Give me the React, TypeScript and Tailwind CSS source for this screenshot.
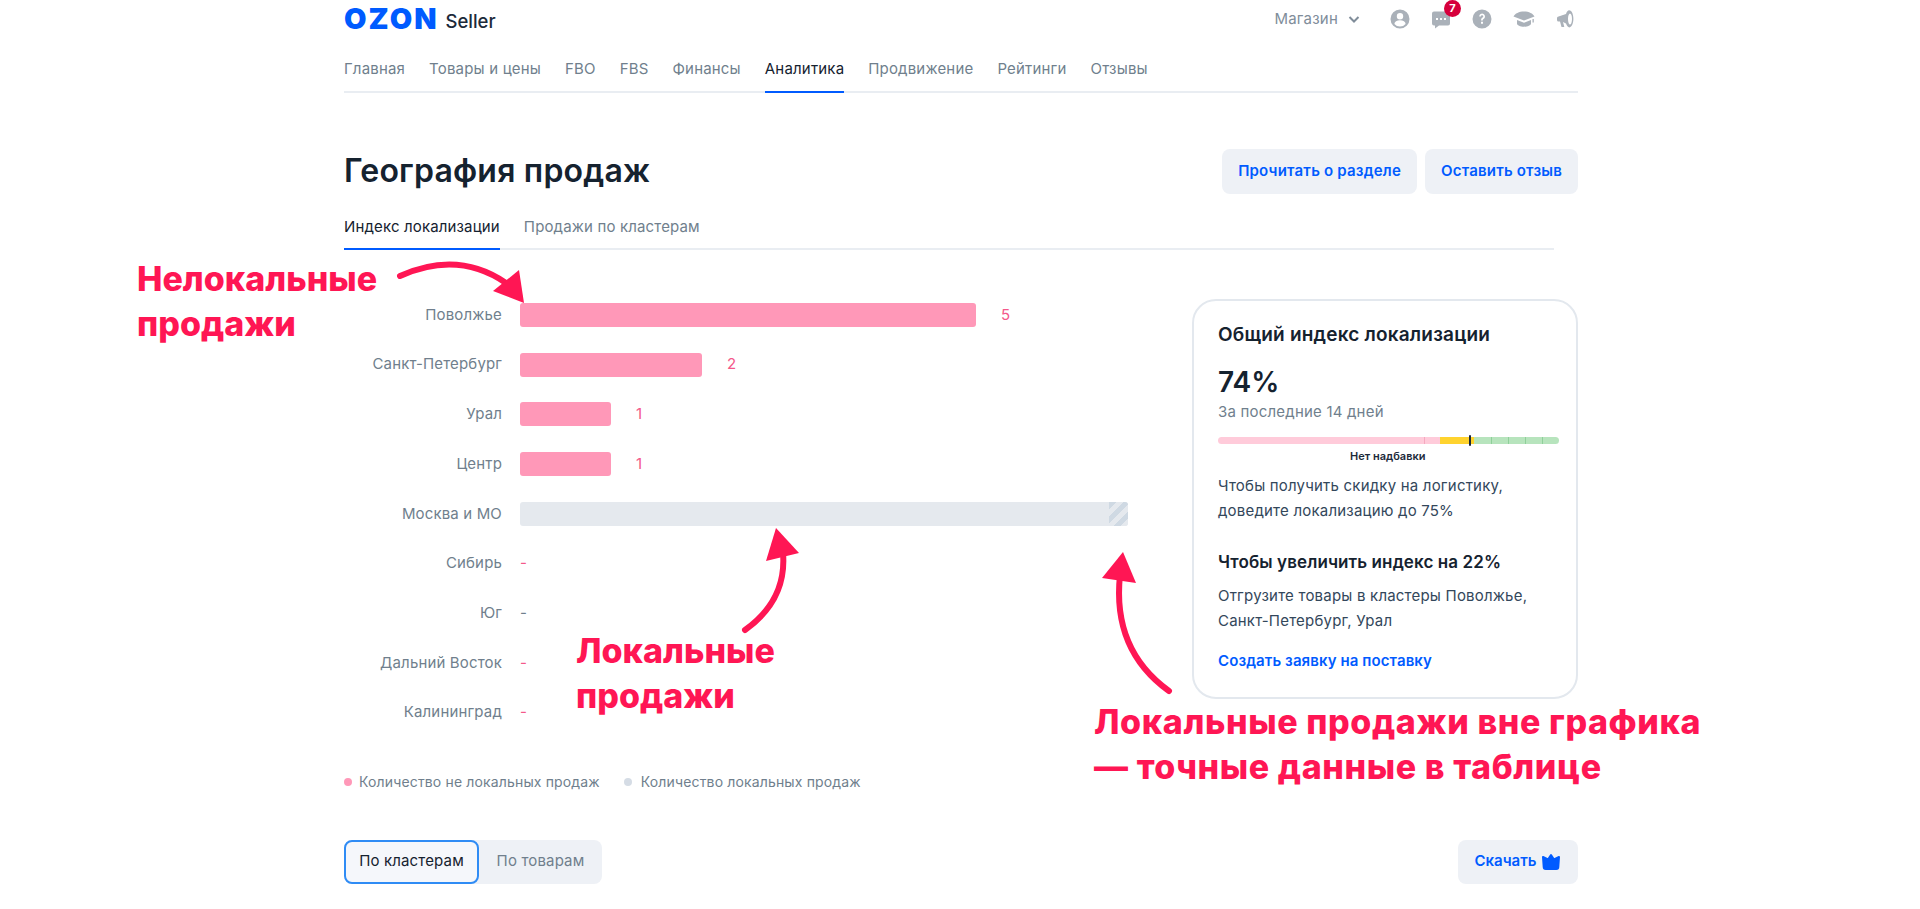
import React from 'react'

const navItems = ['Главная', 'Товары и цены', 'FBO', 'FBS', 'Финансы', 'Аналитика', 'Продвижение', 'Рейтинги', 'Отзывы']

const rows = [
  { name: 'Поволжье', width: 456, value: '5' },
  { name: 'Санкт-Петербург', width: 182, value: '2' },
  { name: 'Урал', width: 91, value: '1' },
  { name: 'Центр', width: 91, value: '1' },
  { name: 'Москва и МО', width: 0, value: '' },
  { name: 'Сибирь', width: 0, value: '-' },
  { name: 'Юг', width: 0, value: '-', muted: true },
  { name: 'Дальний Восток', width: 0, value: '-' },
  { name: 'Калининград', width: 0, value: '-' },
]

function HeaderIcons() {
  return (
    <div className="flex items-center gap-[21px] pr-[2px] text-[#aab1b9]">
      {/* profile */}
      <svg width="20" height="20" viewBox="0 0 20 20" fill="currentColor">
        <path fillRule="evenodd" d="M10 0.500a9.500 9.500 0 1 0 0 19a9.500 9.500 0 0 0 0-19zM10 4a3.200 3.200 0 1 1 0 6.400a3.200 3.200 0 0 1 0-6.400zM4.400 15a5.600 3.800 0 0 1 11.200 0a7.400 7.400 0 0 1-11.200 0z" />
      </svg>
      {/* chat with badge */}
      <div className="relative h-5 w-5">
        <svg width="20" height="20" viewBox="0 0 20 20" fill="currentColor">
          <path fillRule="evenodd" d="M3 2.500h14a2 2 0 0 1 2 2v10a2 2 0 0 1-2 2H8l-4 3V16.500H3a2 2 0 0 1-2-2v-10a2 2 0 0 1 2-2zM5 9h2v2H5zM9 9h2v2H9zM13 9h2v2h-2z" />
        </svg>
        <span className="absolute -top-[9px] left-[13px] flex h-[17px] w-[17px] items-center justify-center rounded-full bg-[#d6003c] text-[11px] font-bold leading-none text-white">
          7
        </span>
      </div>
      {/* help */}
      <svg width="20" height="20" viewBox="0 0 20 20" fill="currentColor">
        <path fillRule="evenodd" d="M10 0.500a9.500 9.500 0 1 0 0 19a9.500 9.500 0 0 0 0-19zM7.200 7.400a2.900 2.900 0 1 1 4.400 2.500c-.7.4-.8.7-.8 1.600H9.100c0-1.500.3-2.200 1.500-2.900.5-.3.7-.6.7-1.100a1.250 1.250 0 0 0-2.500 0zM9 12.700h2v2H9z" />
      </svg>
      {/* courses */}
      <svg width="22" height="20" viewBox="0 0 22 20" fill="currentColor">
        <path d="M11 2.500C6 2.500 2 4.500 0.500 7.500L11 11.500L21.500 7.500C20 4.500 16 2.500 11 2.500zM4 11v3.500c0 1.800 3.200 3.200 7 3.200s7-1.400 7-3.200V11l-7 2.800zM19.500 10h1.300v3.500h-1.300z" />
      </svg>
      {/* announcements */}
      <svg width="20" height="20" viewBox="0 0 20 20" fill="currentColor">
        <path fillRule="evenodd" d="M14 1.500a4 8.500 0 0 0-4 3.500L2.500 7.500A1.500 1.500 0 0 0 1 9v2a1.500 1.500 0 0 0 1.500 1.500H4l1.500 5.500h2.800L7 13l3 1.500a4 8.500 0 1 0 4-13zM14 4.500a2 5.500 0 1 0 0 11a2 5.500 0 0 0 0-11z" />
      </svg>
    </div>
  )
}

export default function App() {
  return (
    <div className="relative h-[909px] overflow-hidden bg-white font-['Inter',sans-serif] text-[#15222f]">
      <div className="ml-[344px] w-[1234px]">
        {/* Top bar */}
        <header className="border-b-2 border-[#e9edf2]">
          <div className="flex h-[44px] items-start justify-between">
            <div className="flex items-end gap-[7px] pt-[4px]">
              <span className="text-[29px] font-black leading-[30px] tracking-[2px] text-[#005bff]">OZON</span>
              <span className="text-[18.500px] font-medium leading-[26px] text-[#1c2a3a]">Seller</span>
            </div>
            <div className="flex items-center pt-[8px]">
              <span className="text-[15px] tracking-[0.2px] text-[#808d9a]">Магазин</span>
              <svg className="ml-[9px] mr-[29px]" width="14" height="14" viewBox="0 0 14 14" fill="none" stroke="#808d9a" strokeWidth="2">
                <path d="M2.500 5l4.500 4.500L11.500 5" />
              </svg>
              <HeaderIcons />
            </div>
          </div>
          <nav className="flex h-[47px] gap-6 text-[15px] tracking-[0.18px]">
            {navItems.map(item => (
              <a
                key={item}
                className={item === 'Аналитика'
                  ? '-mb-[2px] border-b-2 border-[#005bff] pt-[14px] text-[#15222f]'
                  : 'pt-[14px] text-[#707f8d]'}
              >
                {item}
              </a>
            ))}
          </nav>
        </header>

        {/* Title */}
        <div className="mt-[56px] flex items-center justify-between">
          <h1 className="-mt-[2px] text-[32px] font-semibold leading-[45px] tracking-[0.2px] text-[#15222f]">География продаж</h1>
          <div className="flex gap-[8px]">
            <button className="h-[45px] rounded-lg bg-[#eef1f6] px-4 text-[15px] font-semibold tracking-[0.2px] text-[#005bff]">Прочитать о разделе</button>
            <button className="h-[45px] rounded-lg bg-[#eef1f6] px-4 text-[15px] font-semibold tracking-[0.2px] text-[#005bff]">Оставить отзыв</button>
          </div>
        </div>

        {/* Tabs */}
        <div className="mr-[24px] mt-[16px] flex h-[40px] gap-6 border-b-2 border-[#e9edf2] text-[15px] tracking-[0.15px]">
          <a className="-mb-[2px] border-b-2 border-[#005bff] pt-[6px] text-[#15222f]">Индекс локализации</a>
          <a className="pt-[6px] text-[#707f8d]">Продажи по кластерам</a>
        </div>

        {/* Chart and summary */}
        <div className="mt-[49px] flex justify-between">
          <div className="w-[790px] pt-[4px]">
            <div className="flex flex-col gap-[25.700px]">
              {rows.map(row => (
                <div key={row.name} className="flex h-[24px] items-center">
                  <div className="w-[158px] whitespace-nowrap text-right text-[15px] tracking-[0.15px] text-[#707f8d]">{row.name}</div>
                  <div className="ml-[18px] flex items-center">
                    {row.name === 'Москва и МО' ? (
                      <div className="flex h-[24px] w-[608px] overflow-hidden rounded-[3px] bg-[#e5e9ee]">
                        <div className="ml-auto h-full w-[19px] bg-[repeating-linear-gradient(135deg,#cfd9e3_0px,#cfd9e3_5px,#e5e9ee_5px,#e5e9ee_10px)]" />
                      </div>
                    ) : row.width > 0 ? (
                      <>
                        <div className="h-[24px] rounded-[3px] bg-[#ff98b8]" style={{ width: row.width }} />
                        <span className="ml-[25px] text-[15px] text-[#f4588a]">{row.value}</span>
                      </>
                    ) : (
                      <span className={row.muted ? 'text-[15px] text-[#707f8d]' : 'text-[15px] text-[#f4588a]'}>{row.value}</span>
                    )}
                  </div>
                </div>
              ))}
            </div>
            <div className="mt-[47px] flex items-center text-sm tracking-[0.15px] text-[#707f8d]">
              <span className="h-[8px] w-[8px] rounded-full bg-[#ff98b8]" />
              <span className="ml-[7px]">Количество не локальных продаж</span>
              <span className="ml-[24px] h-[8px] w-[8px] rounded-full bg-[#d5dce5]" />
              <span className="ml-[9px]">Количество локальных продаж</span>
            </div>
          </div>

          {/* Summary card */}
          <aside className="h-[400px] w-[386px] rounded-[24px] border-2 border-[#e3e8ee] px-[24px] pt-[21px]">
            <div className="text-[19px] font-semibold leading-[26px] tracking-[0.2px]">Общий индекс локализации</div>
            <div className="mt-[17px] text-[28px] font-semibold leading-[34px]">74%</div>
            <div className="mt-[3px] text-[15px] leading-[20px] tracking-[0.2px] text-[#707f8d]">За последние 14 дней</div>
            <div className="relative mt-[15px] flex h-[7px] w-[341px] overflow-visible rounded-full">
              <div className="h-full w-[222px] rounded-l-full bg-[#ffcbda]" />
              <div className="h-full w-[34px] bg-[#ffd32e]" />
              <div className="h-full flex-1 rounded-r-full bg-[#b7e4bd]" />
              <div className="absolute left-[206px] top-0 h-full w-[1px] bg-[#f5a9c0]" />
              <div className="absolute left-[251px] top-[-2px] h-[11px] w-[2px] rounded bg-[#1c2a3a]" />
              <div className="absolute left-[273px] top-0 h-full w-[1px] bg-[#8fd09a]" />
              <div className="absolute left-[290px] top-0 h-full w-[1px] bg-[#8fd09a]" />
              <div className="absolute left-[307px] top-0 h-full w-[1px] bg-[#8fd09a]" />
              <div className="absolute left-[324px] top-0 h-full w-[1px] bg-[#8fd09a]" />
            </div>
            <div className="mt-[5px] pl-[132px] text-[11px] font-semibold leading-[14px] text-[#1c2a3a]">Нет надбавки</div>
            <p className="mt-[10px] text-[15px] leading-[25px] tracking-[0.2px] text-[#33475b]">
              Чтобы получить скидку на логистику,
              <br />
              доведите локализацию до 75%
            </p>
            <div className="mt-[27px] text-[17px] font-semibold leading-[24px] tracking-[0.1px]">Чтобы увеличить индекс на 22%</div>
            <p className="mt-[9px] text-[15px] leading-[25px] tracking-[0.2px] text-[#33475b]">
              Отгрузите товары в кластеры Поволжье,
              <br />
              Санкт-Петербург, Урал
            </p>
            <a className="mt-[18px] block text-[15px] font-semibold leading-[20px] tracking-[0.1px] text-[#005bff]">Создать заявку на поставку</a>
          </aside>
        </div>

        {/* Bottom controls */}
        <div className="mt-[48px] flex items-center justify-between">
          <div className="flex h-[44px] w-[258px] rounded-lg bg-[#eef1f6] text-[15px] tracking-[0.15px]">
            <button className="h-full w-[135px] rounded-lg border-2 border-[#2f8cf5] bg-[#f5f7fb] text-[#15222f]">По кластерам</button>
            <button className="h-full w-[123px] text-[#707f8d]">По товарам</button>
          </div>
          <button className="flex h-[44px] w-[120px] items-center justify-center gap-[5px] rounded-lg bg-[#eef1f6] text-[15px] font-semibold text-[#005bff]">
            Скачать
            <svg width="20" height="18" viewBox="0 0 20 18" fill="#005bff" stroke="#005bff" strokeWidth="2" strokeLinejoin="round">
              <path d="M10 2l3 4.500 5-2.500-.7 10a2 2 0 0 1-2 2H4.700a2 2 0 0 1-2-2L2 4l5 2.500z" />
            </svg>
          </button>
        </div>
      </div>

      {/* Red annotations on top of the screenshot */}
      <div className="absolute left-[137px] top-[256px] text-[34px] font-extrabold leading-[45px] text-[#ff1654]">
        Нелокальные
        <br />
        продажи
      </div>
      <div className="absolute left-[576px] top-[628px] text-[34px] font-extrabold leading-[45px] text-[#ff1654]">
        Локальные
        <br />
        продажи
      </div>
      <div className="absolute left-[1094px] top-[699px] text-[34px] font-extrabold leading-[45px] tracking-[0.6px] text-[#ff1654]">
        Локальные продажи вне графика
        <br />
        — точные данные в таблице
      </div>
      <svg className="pointer-events-none absolute left-0 top-0" width="1920" height="909" fill="none">
        <path d="M400 276Q458 250 506 283" stroke="#ff1654" strokeWidth="6" strokeLinecap="round" />
        <path d="M524 303L493 291L519 270z" fill="#ff1654" />
        <path d="M745 630Q787 600 783 553" stroke="#ff1654" strokeWidth="6" strokeLinecap="round" />
        <path d="M776 528L766 561L799 553z" fill="#ff1654" />
        <path d="M1169 691Q1112 650 1120 575" stroke="#ff1654" strokeWidth="6" strokeLinecap="round" />
        <path d="M1123 552L1102 578L1136 583z" fill="#ff1654" />
      </svg>
    </div>
  )
}
